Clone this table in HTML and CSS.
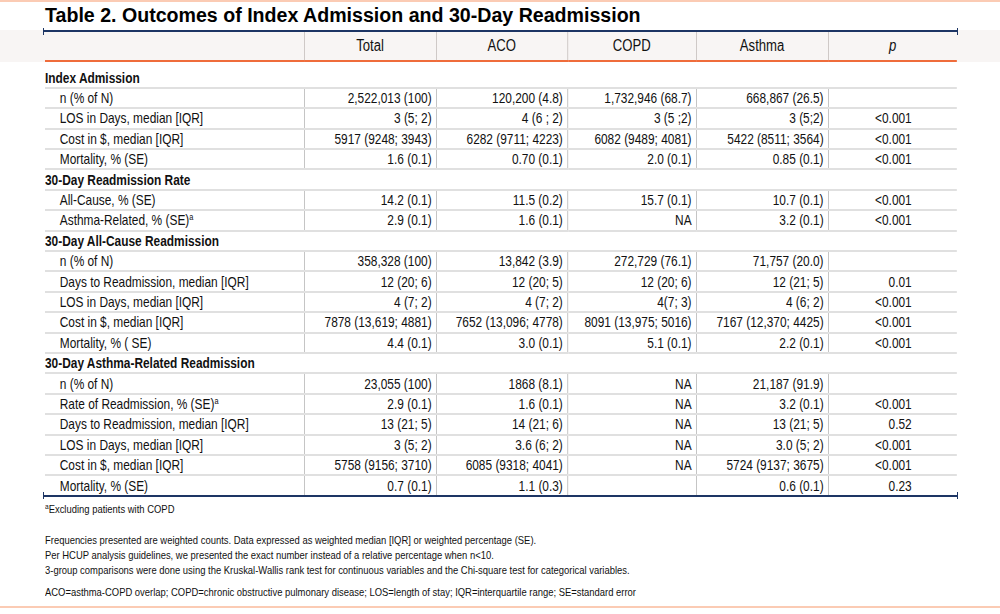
FILE: index.html
```html
<!DOCTYPE html>
<html lang="en">
<head>
<meta charset="utf-8">
<title>Table 2</title>
<link rel="stylesheet" href="styles.css">
</head>
<body>
<div class="page">
  <h1 class="title">Table 2. Outcomes of Index Admission and 30-Day Readmission</h1>
  <div class="table-area">
    <div class="rule"><span class="tick"></span><span class="line"></span><span class="tick"></span></div>
    <table class="outcomes">
      <colgroup>
        <col class="c-label"><col class="c-total"><col class="c-aco"><col class="c-copd"><col class="c-asthma"><col class="c-p">
      </colgroup>
      <thead>
        <tr><th></th><th>Total</th><th>ACO</th><th>COPD</th><th>Asthma</th><th><i>p</i></th></tr>
      </thead>
      <tbody>
        <tr class="section first"><td colspan="6">Index Admission</td></tr>
        <tr><td>n (% of N)</td><td>2,522,013 (100)</td><td>120,200 (4.8)</td><td>1,732,946 (68.7)</td><td>668,867 (26.5)</td><td></td></tr>
        <tr><td>LOS in Days, median [IQR]</td><td>3 (5; 2)</td><td>4 (6 ; 2)</td><td>3 (5 ;2)</td><td>3 (5;2)</td><td>&lt;0.001</td></tr>
        <tr><td>Cost in $, median [IQR]</td><td>5917 (9248; 3943)</td><td>6282 (9711; 4223)</td><td>6082 (9489; 4081)</td><td>5422 (8511; 3564)</td><td>&lt;0.001</td></tr>
        <tr><td>Mortality, % (SE)</td><td>1.6 (0.1)</td><td>0.70 (0.1)</td><td>2.0 (0.1)</td><td>0.85 (0.1)</td><td>&lt;0.001</td></tr>

        <tr class="section"><td colspan="6">30-Day Readmission Rate</td></tr>
        <tr><td>All-Cause, % (SE)</td><td>14.2 (0.1)</td><td>11.5 (0.2)</td><td>15.7 (0.1)</td><td>10.7 (0.1)</td><td>&lt;0.001</td></tr>
        <tr><td>Asthma-Related, % (SE)<sup class="fn">a</sup></td><td>2.9 (0.1)</td><td>1.6 (0.1)</td><td>NA</td><td>3.2 (0.1)</td><td>&lt;0.001</td></tr>

        <tr class="section"><td colspan="6">30-Day All-Cause Readmission</td></tr>
        <tr><td>n (% of N)</td><td>358,328 (100)</td><td>13,842 (3.9)</td><td>272,729 (76.1)</td><td>71,757 (20.0)</td><td></td></tr>
        <tr><td>Days to Readmission, median [IQR]</td><td>12 (20; 6)</td><td>12 (20; 5)</td><td>12 (20; 6)</td><td>12 (21; 5)</td><td>0.01</td></tr>
        <tr><td>LOS in Days, median [IQR]</td><td>4 (7; 2)</td><td>4 (7; 2)</td><td>4(7; 3)</td><td>4 (6; 2)</td><td>&lt;0.001</td></tr>
        <tr><td>Cost in $, median [IQR]</td><td>7878 (13,619; 4881)</td><td>7652 (13,096; 4778)</td><td>8091 (13,975; 5016)</td><td>7167 (12,370; 4425)</td><td>&lt;0.001</td></tr>
        <tr><td>Mortality, % ( SE)</td><td>4.4 (0.1)</td><td>3.0 (0.1)</td><td>5.1 (0.1)</td><td>2.2 (0.1)</td><td>&lt;0.001</td></tr>

        <tr class="section"><td colspan="6">30-Day Asthma-Related Readmission</td></tr>
        <tr><td>n (% of N)</td><td>23,055 (100)</td><td>1868 (8.1)</td><td>NA</td><td>21,187 (91.9)</td><td></td></tr>
        <tr><td>Rate of Readmission, % (SE)<sup class="fn">a</sup></td><td>2.9 (0.1)</td><td>1.6 (0.1)</td><td>NA</td><td>3.2 (0.1)</td><td>&lt;0.001</td></tr>
        <tr><td>Days to Readmission, median [IQR]</td><td>13 (21; 5)</td><td>14 (21; 6)</td><td>NA</td><td>13 (21; 5)</td><td>0.52</td></tr>
        <tr><td>LOS in Days, median [IQR]</td><td>3 (5; 2)</td><td>3.6 (6; 2)</td><td>NA</td><td>3.0 (5; 2)</td><td>&lt;0.001</td></tr>
        <tr><td>Cost in $, median [IQR]</td><td>5758 (9156; 3710)</td><td>6085 (9318; 4041)</td><td>NA</td><td>5724 (9137; 3675)</td><td>&lt;0.001</td></tr>
        <tr class="last"><td>Mortality, % (SE)</td><td>0.7 (0.1)</td><td>1.1 (0.3)</td><td></td><td>0.6 (0.1)</td><td>0.23</td></tr>
      </tbody>
    </table>
    <div class="rule"><span class="tick"></span><span class="line"></span><span class="tick"></span></div>
  </div>
  <div class="notes">
    <p class="note-a"><sup class="fn">a</sup>Excluding patients with COPD</p>
    <p class="note-group">Frequencies presented are weighted counts. Data expressed as weighted median [IQR] or weighted percentage (SE).<br>Per HCUP analysis guidelines, we presented the exact number instead of a relative percentage when n&lt;10.<br>3-group comparisons were done using the Kruskal-Wallis rank test for continuous variables and the Chi-square test for categorical variables.</p>
    <p class="note-abbr">ACO=asthma-COPD overlap; COPD=chronic obstructive pulmonary disease; LOS=length of stay; IQR=interquartile range; SE=standard error</p>
  </div>
</div>
</body>
</html>
```

FILE: styles.css
```css
html, body {
  margin: 0;
  padding: 0;
  background: #ffffff;
}

/* Arial Narrow is not installed: the narrow text is Liberation Sans
   (Arial metrics) compressed horizontally to 82 %, which is what
   Arial Narrow is. */
.page {
  width: 1000px;
  height: 608px;
  overflow: hidden;
  box-sizing: border-box;
  border-top: 2px solid #fbcbb4;
  border-bottom: 2px solid #fbcbb4;
  color: #111111;
  font-family: "Liberation Sans", Arial, sans-serif;
}

.title {
  margin: 0;
  padding: 1px 0 0 45px;
  height: 25px;
  font-weight: bold;
  font-size: 19.6px;
  line-height: 24px;
  color: #000000;
}

.table-area {
  padding-top: 2px;
  background: linear-gradient(#f8f5f4, #f8f5f4) no-repeat 0 2px / 100% 32px;
}

.rule {
  display: flex;
  align-items: center;
  height: 2px;
  margin: 0 42px 0 43px;
}

.rule .line {
  flex: 1;
  height: 2px;
  background: #1d3564;
}

.rule .tick {
  width: 1px;
  height: 7px;
  flex: none;
  background: #1d3564;
}

.outcomes {
  margin-left: 45px;
  width: 1112px;
  table-layout: fixed;
  border-collapse: collapse;
  font-size: 14.5px;
  transform: scaleX(0.82);
  transform-origin: 0 0;
}

.c-label { width: 316px; }
.c-total { width: 161px; }
.c-aco { width: 160px; }
.c-copd { width: 157px; }
.c-asthma { width: 161px; }
.c-p { width: 157px; }

.outcomes th {
  height: 28px;
  padding: 0;
  font-weight: normal;
  font-size: 16px;
  text-align: center;
  border-bottom: 2px solid #ef6c3b;
  border-left: 1px solid #c6c0be;
}

.outcomes th:first-child {
  border-left: none;
}

.outcomes td {
  height: 18.4px;
  padding: 0 5px 0 0;
  line-height: 18px;
  text-align: right;
  white-space: nowrap;
  border-bottom: 2px solid #e0e0e0;
  border-left: 1px solid #b9b9b9;
}

.outcomes td:first-child {
  text-align: left;
  padding-left: 18px;
  border-left: none;
}

.outcomes td:last-child {
  padding-right: 55px;
}

.outcomes .section td {
  padding: 0;
  font-weight: bold;
  text-align: left;
}

.outcomes .section.first td {
  padding-top: 6.5px;
}

.outcomes .last td {
  border-bottom: none;
}

.fn {
  font-size: 9px;
  line-height: 0;
  vertical-align: 5px;
}

.notes {
  width: 1100px;
  margin: 5px 0 0 45px;
  font-size: 11.5px;
  line-height: 15px;
  transform: scaleX(0.82);
  transform-origin: 0 0;
}

.notes p {
  margin: 0;
}

.notes .fn {
  font-size: 8px;
  vertical-align: 4px;
}

.note-group {
  margin-top: 16px !important;
}

.note-abbr {
  margin-top: 7px !important;
}
```
